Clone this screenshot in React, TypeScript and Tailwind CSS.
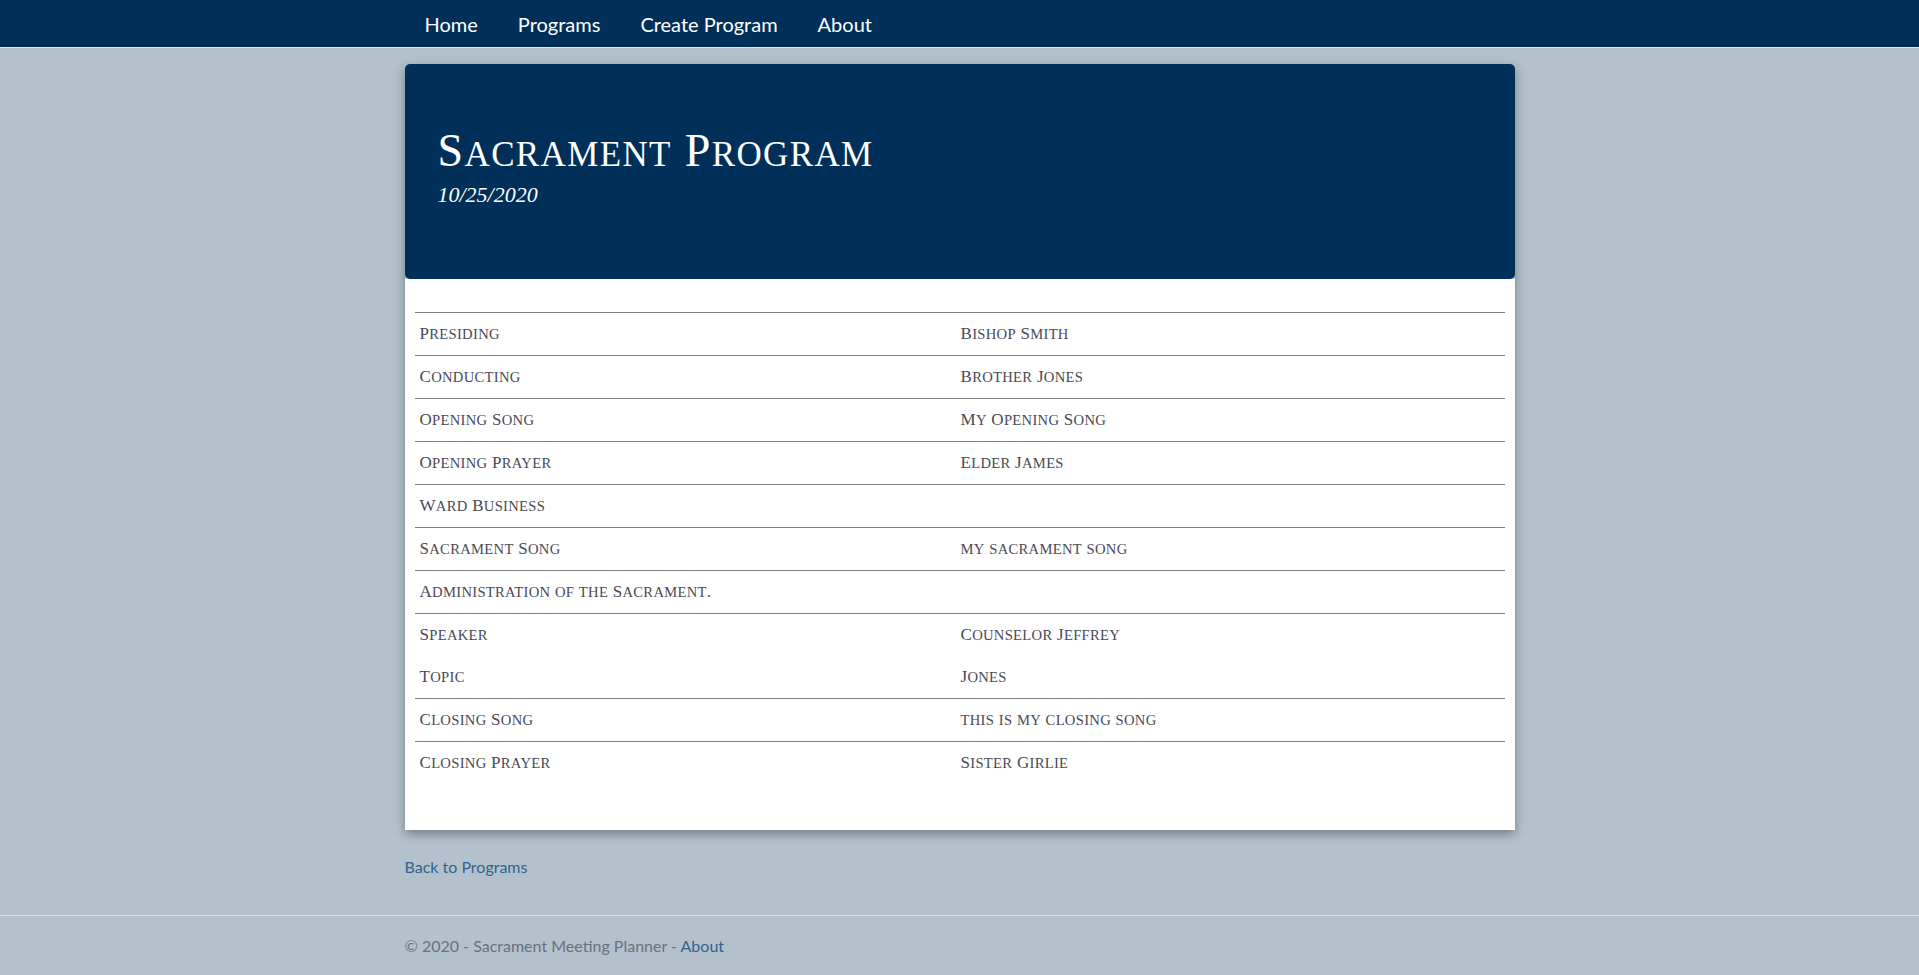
import React from 'react';

const rows: { label: string; value: string; border: boolean }[] = [
  { label: 'Presiding', value: 'Bishop Smith', border: true },
  { label: 'Conducting', value: 'Brother Jones', border: true },
  { label: 'Opening Song', value: 'My Opening Song', border: true },
  { label: 'Opening Prayer', value: 'Elder James', border: true },
  { label: 'Ward Business', value: '', border: true },
  { label: 'Sacrament Song', value: 'my sacrament song', border: true },
  { label: 'Administration of the Sacrament.', value: '', border: true },
  { label: 'Speaker', value: 'Counselor Jeffrey', border: true },
  { label: 'Topic', value: 'Jones', border: false },
  { label: 'Closing Song', value: 'this is my closing song', border: true },
  { label: 'Closing Prayer', value: 'Sister Girlie', border: true },
];

const sans = "font-['Lato','Open_Sans',sans-serif]";
const serif = "font-['Liberation_Serif','Times_New_Roman',serif]";

// Cinzel-like caps: lowercase runs become slightly smaller capitals
function Caps({ text, small }: { text: string; small: string }) {
  const parts = text.split(/([a-z]+)/);
  return (
    <>
      {parts.map((p, i) =>
        /^[a-z]+$/.test(p) ? (
          <span key={i} className={`uppercase ${small}`}>
            {p}
          </span>
        ) : (
          <React.Fragment key={i}>{p}</React.Fragment>
        )
      )}
    </>
  );
}

export default function App() {
  return (
    <div className={`min-h-screen bg-[#b2c1cc] ${sans}`}>
      {/* navbar */}
      <header className="bg-[#003059] border-b border-[#dfe4e8]">
        <nav className="mx-auto w-[1110px] h-[47px] flex items-center">
          {['Home', 'Programs', 'Create Program', 'About'].map((item) => (
            <a key={item} href="#" className="px-[20px] text-[20px] leading-6 text-white">
              {item}
            </a>
          ))}
        </nav>
      </header>

      <main className="mx-auto w-[1110px] pt-4">
        <div className="shadow-[0_4px_10px_rgba(0,0,0,0.35)]">
          <div className="bg-[#003059] rounded-[5px] h-[215px] px-[33px] pt-[59px]">
            <h1 className={`${serif} text-white text-[46px] leading-[1.2] tracking-[1.4px]`}>
              <Caps text="Sacrament Program" small="text-[0.76em]" />
            </h1>
            <p className={`${serif} text-white italic text-[22px] leading-[33px]`}>10/25/2020</p>
          </div>
          <div className="bg-white px-[10px] pt-[33px] pb-[46px]">
            <table className={`w-full border-collapse ${serif} text-[17px] leading-6 tracking-[0.3px] text-[#4a4a56]`}>
              <tbody>
                {rows.map((r) => (
                  <tr key={r.label} className={r.border ? 'border-t border-[#808080]' : ''}>
                    <td className="w-[541px] px-[5px] py-[9px]">
                      <Caps text={r.label} small="text-[0.86em]" />
                    </td>
                    <td className="px-[5px] py-[9px]">
                      <Caps text={r.value} small="text-[0.86em]" />
                    </td>
                  </tr>
                ))}
              </tbody>
            </table>
          </div>
        </div>

        <a href="#" className="block mt-[25px] text-[16px] leading-6 text-[#35638f]">
          Back to Programs
        </a>
      </main>

      <footer className="mt-[36px] border-t border-[#dde3e8]">
        <div className="mx-auto w-[1110px] leading-[60px] text-[16px] text-[#67727c]">
          © 2020 - Sacrament Meeting Planner - <a href="#" className="text-[#35638f]">About</a>
        </div>
      </footer>
    </div>
  );
}
